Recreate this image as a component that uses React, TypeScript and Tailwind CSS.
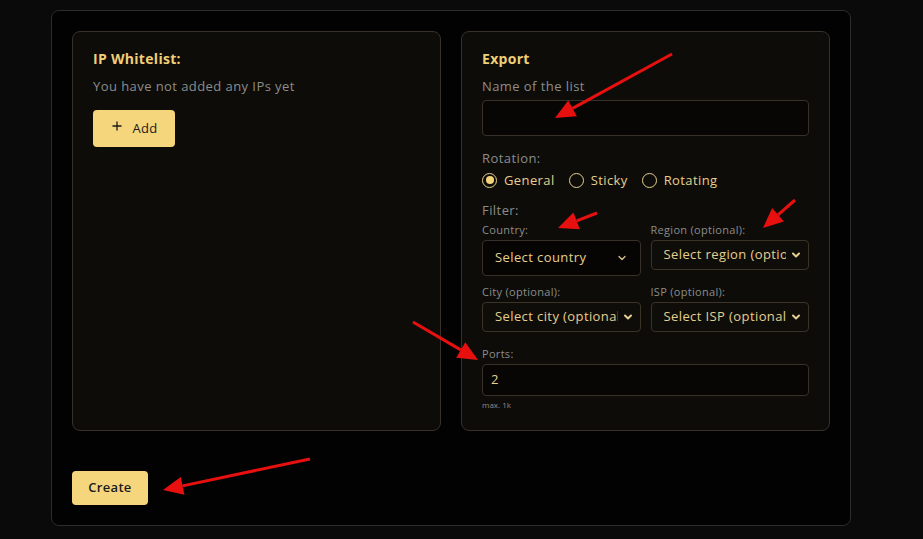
import { Plus, ChevronDown } from 'lucide-react'

const font = { fontFamily: '"Open Sans", "Noto Sans", sans-serif' }

function Radio({ label, checked }: { label: string; checked?: boolean }) {
  return (
    <label className="flex items-center gap-[7px] text-[13px] leading-[16px] tracking-[0.4px] text-[#e6cf8e]">
      <span className="w-[15px] h-[15px] rounded-full border-[1.5px] border-[#e6cf8e] flex items-center justify-center">
        {checked && <span className="w-[8px] h-[8px] rounded-full bg-[#f2d27a]" />}
      </span>
      {label}
    </label>
  )
}

function NativeSelect({ label, value }: { label: string; value: string }) {
  return (
    <div>
      <p className="text-[11px] leading-[14px] tracking-[0.3px] text-[#8c8c8c] mb-[3px]">{label}</p>
      <div className="h-[30px] flex items-center justify-between pl-[12px] pr-[6px] bg-[#0e0d0a] border border-[#3a3427] rounded-[4px] overflow-hidden">
        <span className="text-[13px] tracking-[0.4px] text-[#e6cf8e] whitespace-nowrap overflow-hidden">{value}</span>
        <ChevronDown className="w-[12px] h-[12px] text-[#e6cf8e] flex-shrink-0 ml-1" strokeWidth={4} />
      </div>
    </div>
  )
}

function Arrows() {
  const arrows = [
    [672, 54, 555, 118],
    [597, 213, 558, 228],
    [795, 200, 763, 228],
    [413, 322, 478, 360],
    [310, 459, 163, 490],
  ]
  return (
    <svg className="absolute inset-0 pointer-events-none" width={923} height={539}>
      {arrows.map(([x1, y1, x2, y2], i) => {
        const a = Math.atan2(y2 - y1, x2 - x1)
        const len = 20
        const w = 9
        const bx = x2 - Math.cos(a) * len
        const by = y2 - Math.sin(a) * len
        const px = -Math.sin(a) * w
        const py = Math.cos(a) * w
        return (
          <g key={i}>
            <line x1={x1} y1={y1} x2={bx} y2={by} stroke="#e8100f" strokeWidth={3} />
            <polygon points={`${x2},${y2} ${bx + px},${by + py} ${bx - px},${by - py}`} fill="#e8100f" />
          </g>
        )
      })}
    </svg>
  )
}

export default function App() {
  return (
    <div className="relative w-[923px] h-[539px] bg-[#0a0a0a] pl-[51px] pt-[10px] overflow-hidden" style={font}>
      <div className="w-[800px] h-[516px] bg-[#020202] border border-[#2c2c2c] rounded-[8px] px-5 pt-5">
        <div className="grid grid-cols-2 gap-5">
          {/* IP Whitelist */}
          <div className="h-[400px] bg-[#0d0c09] border border-[#37312a] rounded-[8px] p-5">
            <h2 className="text-[14px] font-bold tracking-[0.3px] text-[#f0cf77] leading-[16px] -mt-[1px]">IP Whitelist:</h2>
            <p className="text-[13px] leading-[16px] tracking-[0.43px] text-[#8c8c8c] mt-[11px]">You have not added any IPs yet</p>
            <button className="mt-[16px] h-[37px] w-[82px] bg-[#f5d67c] rounded-[4px] flex items-center justify-center gap-[8px] text-[13px] font-medium tracking-[0.3px] text-[#1a1a1a]">
              <Plus className="w-[14px] h-[14px] -mt-[5px]" strokeWidth={2.2} />
              Add
            </button>
          </div>

          {/* Export */}
          <div className="h-[400px] bg-[#0d0c09] border border-[#37312a] rounded-[8px] p-5">
            <h2 className="text-[14px] font-bold tracking-[0.3px] text-[#f0cf77] leading-[16px] -mt-[1px]">Export</h2>
            <p className="text-[13px] leading-[16px] tracking-[0.43px] text-[#8c8c8c] mt-[11px]">Name of the list</p>
            <div className="mt-[6px] h-[36px] bg-[#070604] border border-[#37312a] rounded-[4px]" />

            <p className="text-[13px] leading-[16px] tracking-[0.43px] text-[#8c8c8c] mt-[14px]">Rotation:</p>
            <div className="flex items-center gap-[14px] mt-[6px]">
              <Radio label="General" checked />
              <Radio label="Sticky" />
              <Radio label="Rotating" />
            </div>

            <p className="text-[13px] leading-[16px] tracking-[0.43px] text-[#8c8c8c] mt-[14px]">Filter:</p>
            <div className="grid grid-cols-2 gap-x-[10px] gap-y-[9px] mt-[5px]">
              <div>
                <p className="text-[11px] leading-[14px] tracking-[0.3px] text-[#8c8c8c] mb-[3px]">Country:</p>
                <div className="h-[36px] flex items-center justify-between pl-[12px] pr-[12px] bg-[#060504] border border-[#37312a] rounded-[4px]">
                  <span className="text-[13px] tracking-[0.4px] text-[#e6cf8e]">Select country</span>
                  <ChevronDown className="w-[12px] h-[12px] text-[#d9c591]" strokeWidth={2.5} />
                </div>
              </div>
              <NativeSelect label="Region (optional):" value="Select region (optional)" />
              <NativeSelect label="City (optional):" value="Select city (optional)" />
              <NativeSelect label="ISP (optional):" value="Select ISP (optional)" />
            </div>

            <p className="text-[11px] leading-[14px] tracking-[0.3px] text-[#8c8c8c] mt-[15px] mb-[3px]">Ports:</p>
            <div className="h-[32px] flex items-center px-[8px] bg-[#070604] border border-[#37312a] rounded-[4px] text-[13px] text-[#e6cf8e]">
              2
            </div>
            <p className="text-[8px] leading-[10px] text-[#8c8c8c] mt-[4px]">max. 1k</p>
          </div>
        </div>

        <button className="mt-[40px] h-[34px] w-[76px] bg-[#f5d67c] rounded-[4px] text-[13px] font-semibold tracking-[0.3px] text-[#1a1a1a]">
          Create
        </button>
      </div>
      <Arrows />
    </div>
  )
}
